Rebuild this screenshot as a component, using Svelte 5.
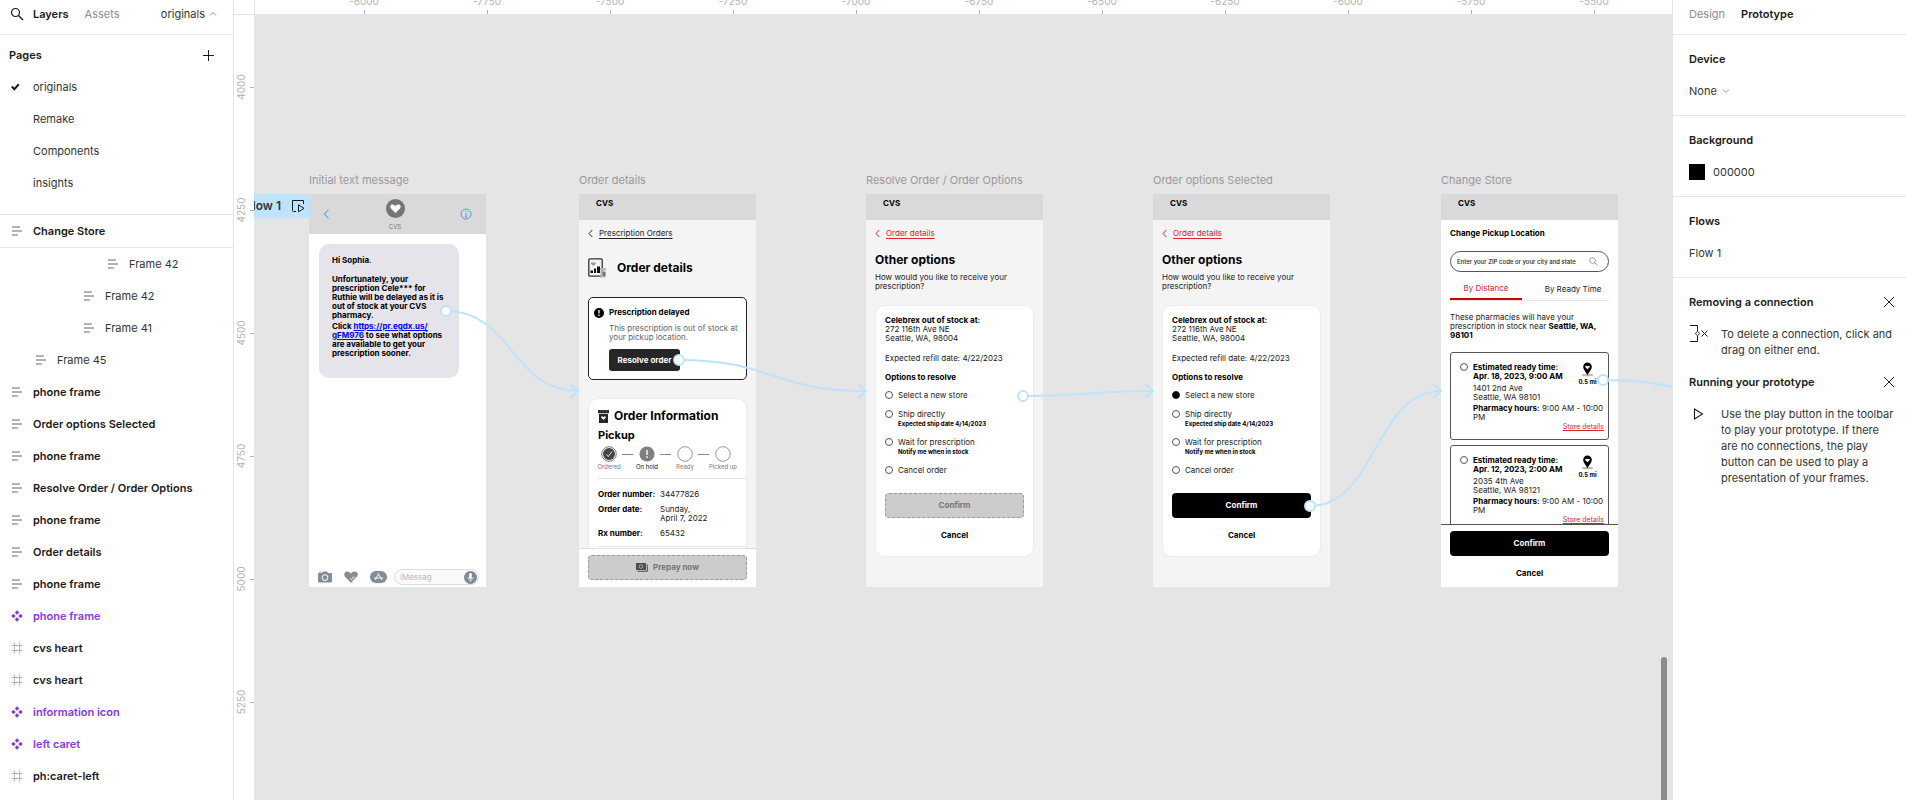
<script>
  const pages = ['originals', 'Remake', 'Components', 'insights'];
  const layers = [
    { name: 'Frame 42', icon: 'auto', depth: 4 },
    { name: 'Frame 42', icon: 'auto', depth: 3 },
    { name: 'Frame 41', icon: 'auto', depth: 3 },
    { name: 'Frame 45', icon: 'auto', depth: 1 },
    { name: 'phone frame', icon: 'auto', depth: 0 },
    { name: 'Order options Selected', icon: 'auto', depth: 0 },
    { name: 'phone frame', icon: 'auto', depth: 0 },
    { name: 'Resolve Order / Order Options', icon: 'auto', depth: 0 },
    { name: 'phone frame', icon: 'auto', depth: 0 },
    { name: 'Order details', icon: 'auto', depth: 0 },
    { name: 'phone frame', icon: 'auto', depth: 0 },
    { name: 'phone frame', icon: 'component', depth: 0 },
    { name: 'cvs heart', icon: 'frame', depth: 0 },
    { name: 'cvs heart', icon: 'frame', depth: 0 },
    { name: 'information icon', icon: 'component', depth: 0 },
    { name: 'left caret', icon: 'component', depth: 0 },
    { name: 'ph:caret-left', icon: 'frame', depth: 0 }
  ];

  const columns = Array.from({ length: 11 }, (_, i) => ({ label: -8000 + i * 250, at: 109 + i * 123 }));
  const lines = Array.from({ length: 6 }, (_, i) => ({ label: 4000 + i * 250, at: 72 + i * 123 }));

  const frames = [
    { id: 'message', title: 'Initial text message', x: 55 },
    { id: 'details', title: 'Order details', x: 325 },
    { id: 'options', title: 'Resolve Order / Order Options', x: 612 },
    { id: 'selected', title: 'Order options Selected', x: 899 },
    { id: 'store', title: 'Change Store', x: 1187 }
  ];

  const links = [
    { x1: 192, y1: 296, x2: 324, y2: 376 },
    { x1: 425, y1: 345, x2: 612, y2: 376 },
    { x1: 769, y1: 381, x2: 899, y2: 376 },
    { x1: 1056, y1: 491, x2: 1187, y2: 376 },
    { x1: 1349, y1: 365, x2: 1474, y2: 376 }
  ];
  const curve = (l) => {
    const m = (l.x1 + l.x2) / 2;
    return `M${l.x1} ${l.y1}C${m} ${l.y1} ${m} ${l.y2} ${l.x2} ${l.y2}`;
  };

  const choices = [
    { label: 'Select a new store' },
    { label: 'Ship directly', note: 'Expected ship date 4/14/2023' },
    { label: 'Wait for prescription', note: 'Notify me when in stock' },
    { label: 'Cancel order' }
  ];
  const stores = [
    { time: 'Apr. 18, 2023, 9:00 AM', street: '1401 2nd Ave', city: 'Seattle, WA 98101' },
    { time: 'Apr. 12, 2023, 2:00 AM', street: '2035 4th Ave', city: 'Seattle, WA 98121' }
  ];
</script>

{#snippet layerIcon(kind)}
  <svg class="licon" width="12" height="12" viewBox="0 0 12 12" aria-hidden="true">
    {#if kind === 'auto'}
      <path d="M1 1h8v2H1zM1 5h10v2H1zM1 9h6v2H1z" fill="#b3b3b3" />
    {:else if kind === 'component'}
      <path d="M6 .3 8.2 2.500 6 4.700 3.800 2.500zM6 7.300l2.200 2.200L6 11.700 3.800 9.500zM2.500 3.800 4.700 6 2.500 8.200.3 6zM9.500 3.800 11.700 6 9.500 8.200 7.300 6z" fill="#8638e5" />
    {:else}
      <path d="M3.500.5v11M8.500.5v11M.5 3.500h11M.5 8.500h11" stroke="#b3b3b3" fill="none" />
    {/if}
  </svg>
{/snippet}

{#snippet caret()}
  <svg width="5" height="9" viewBox="0 0 5 9" aria-hidden="true"><path d="M4.300 1 1 4.500 4.300 8" fill="none" stroke="currentColor" /></svg>
{/snippet}

{#snippet closeIcon()}
  <svg width="12" height="12" viewBox="0 0 12 12" aria-hidden="true"><path d="m1 1 10 10M11 1 1 11" stroke="#1a1a1a" fill="none" /></svg>
{/snippet}

{#snippet optionsScreen(id, picked)}
  <div class="brand">CVS</div>
  <div class="body">
    <a class="crumb red" href="#details">{@render caret()}<span>Order details</span></a>
    <h2 class="big top">Other options</h2>
    <p class="sub">How would you like to receive your<br />prescription?</p>
    <div class="card choice">
      <p><b>Celebrex out of stock at:</b><br />272 116th Ave NE<br />Seattle, WA, 98004</p>
      <p class="refill">Expected refill date: 4/22/2023</p>
      <h3>Options to resolve</h3>
      <div class="radios">
        {#each choices as c, i}
          <label class="radio">
            <input type="radio" name={id} checked={picked && i === 0} />
            <span>{c.label}{#if c.note}<small>{c.note}</small>{/if}</span>
          </label>
        {/each}
      </div>
      <button class={picked ? 'primary' : 'disabled'}>Confirm</button>
      <button class="plain">Cancel</button>
    </div>
  </div>
{/snippet}

<div class="app">
  <aside class="left">
    <header class="tabs">
      <svg class="search" width="14" height="14" viewBox="0 0 14 14" aria-hidden="true"><circle cx="5.500" cy="5.500" r="4" fill="none" stroke="#1a1a1a" stroke-width="1.200" /><path d="m8.500 8.500 4.500 4.500" stroke="#1a1a1a" stroke-width="1.400" /></svg>
      <button class="tab on">Layers</button>
      <button class="tab">Assets</button>
      <button class="pagesel">originals
        <svg width="8" height="6" viewBox="0 0 8 6" aria-hidden="true"><path d="M1 4.500 4 1.500l3 3" fill="none" stroke="#999" /></svg>
      </button>
    </header>
    <section class="pages">
      <div class="pagehead">
        <h2>Pages</h2>
        <button aria-label="Add page"><svg width="12" height="12" viewBox="0 0 12 12" aria-hidden="true"><path d="M6.500 1v11M1 6.500h11" stroke="#1a1a1a" /></svg></button>
      </div>
      {#each pages as p, i}
        <button class="row">
          <span class="mark">
            {#if i === 0}<svg width="10" height="8" viewBox="0 0 10 8" aria-hidden="true"><path d="m.8 3.500 2.500 2.700L7.800 1.300" fill="none" stroke="#1a1a1a" stroke-width="2" /></svg>{/if}
          </span>{p}
        </button>
      {/each}
    </section>
    <button class="row strong pinned"><span class="mark">{@render layerIcon('auto')}</span>Change Store</button>
    <nav class="layers">
      {#each layers as l}
        <button class="row depth{l.depth}" class:strong={l.depth === 0} class:purple={l.icon === 'component'}>
          <span class="mark">{@render layerIcon(l.icon)}</span>{l.name}
        </button>
      {/each}
    </nav>
  </aside>

  <main class="work">
    <div class="corner"></div>
    <svg class="ruler-x" aria-hidden="true">
      {#each columns as c}
        <text x={c.at} y="5" text-anchor="middle">{c.label}</text>
        <path d="M{c.at}.5 10v4" />
      {/each}
    </svg>
    <svg class="ruler-y" aria-hidden="true">
      {#each lines as l}
        <text text-anchor="middle" transform="translate(11 {l.at}) rotate(-90)">{l.label}</text>
        <path d="M16 {l.at}.5h4" />
      {/each}
    </svg>

    <div class="canvas">
      <div class="flowtag">
        <span>Flow 1</span>
        <svg width="14" height="14" viewBox="0 0 14 14" aria-hidden="true"><path d="M5 12.500H2.500a1 1 0 0 1-1-1v-10h11V5" fill="none" stroke="#1a1a1a" /><path d="M7.500 5.800v7l5.500-3.500z" fill="none" stroke="#1a1a1a" /></svg>
      </div>

      {#each frames as f}
        <article class="frame" style="left:{f.x}px">
          <h1>{f.title}</h1>
          <div class="phone" class:white={f.id === 'store' || f.id === 'message'}>
            {#if f.id === 'message'}
              <div class="contact">
                <button aria-label="Back"><svg width="7" height="10" viewBox="0 0 7 10" aria-hidden="true"><path d="M5.500.8 1.300 5l4.200 4.200" fill="none" stroke="#2f8af5" /></svg></button>
                <div class="who">
                  <svg width="19" height="19" viewBox="0 0 19 19" aria-hidden="true"><circle cx="9.500" cy="9.500" r="9.500" fill="#757575" /><path d="M9.500 14 5 9.500C3.500 7.700 4.600 5.500 6.600 5.500c1.300 0 2.300.8 2.900 1.800.6-1 1.600-1.800 2.900-1.800 2 0 3.100 2.200 1.600 4z" fill="#fff" /></svg>
                  <span>CVS</span>
                </div>
                <button aria-label="Info"><svg width="12" height="12" viewBox="0 0 12 12" aria-hidden="true"><circle cx="6" cy="6" r="5" fill="none" stroke="#2f8af5" stroke-width=".8" /><path d="M6 5v4M6 3v1M5 9h2" stroke="#2f8af5" stroke-width=".8" /></svg></button>
              </div>
              <div class="bubble">
                <p>Hi Sophia.</p>
                <p>Unfortunately, your<br />prescription Cele*** for<br />Ruthie will be delayed as it is<br />out of stock at your CVS<br />pharmacy.</p>
                <p>Click <a href="#pr">https://pr.egdx.us/<br />gFM976</a> to see what options<br />are available to get your<br />prescription sooner.</p>
              </div>
              <div class="compose">
                <svg width="14" height="12" viewBox="0 0 14 12" aria-hidden="true"><path d="M1 2h3l1-1.500h4L10 2h3q1 0 1 1v7.500q0 1-1 1H1q-1 0-1-1V3q0-1 1-1zM1 .8h2v.8H1z" fill="#848c99" /><circle cx="7" cy="6.600" r="2.900" fill="#848c99" stroke="#fff" /></svg>
                <svg width="14" height="12" viewBox="0 0 14 12" aria-hidden="true"><path d="M7 12 1.200 6C-1 3.300.8.500 3.500.500 5.200.5 6.400 1.500 7 2.700 7.600 1.500 8.800.5 10.500.5c2.700 0 4.500 2.800 2.300 5.500z" fill="#848c99" /><path d="M6 7 8.500 9.800M8 6l4 4.500M10 5.500l3.500 3.500" stroke="#fff" stroke-width=".9" /></svg>
                <svg width="17" height="12" viewBox="0 0 17 12" aria-hidden="true"><rect width="17" height="12" rx="6" fill="#848c99" /><path d="M5 9 9 2.500M8 2.500 12 9M4 7h6M11 7h2" stroke="#fff" stroke-width=".9" fill="none" /></svg>
                <label class="msg">
                  <input aria-label="Message" placeholder="iMessag" />
                  <svg width="13" height="13" viewBox="0 0 13 13" aria-hidden="true"><circle cx="6.500" cy="6.500" r="6.500" fill="#7d8796" /><rect x="5.200" y="2" width="2.600" height="6" rx="1.300" fill="#fff" /><path d="M3.800 6c0 4 5.400 4 5.400 0M6.500 9v2" stroke="#fff" stroke-width=".7" fill="none" /></svg>
                </label>
              </div>
            {:else if f.id === 'details'}
              <div class="brand">CVS</div>
              <div class="body">
                <a class="crumb" href="#orders">{@render caret()}<span>Prescription Orders</span></a>
                <div class="hero">
                  <svg width="19" height="20" viewBox="0 0 19 20" aria-hidden="true"><rect x=".8" y=".8" width="13.400" height="17.400" rx="1" fill="#f4f4f4" stroke="#333" stroke-width="1.300" /><path d="M2.500 12.500h2.500V15H2.500zM6 10.500h2V15H6zM9 8.500h3V15H9z" fill="#111" /><path d="m5.300 8-2.300-2.300c-.8-1.200.8-2.300 2.300-.9 1.500-1.400 3.100-.3 2.300.9z" fill="#999" /><path d="M12 10h6v2h-6zM12.500 12.500h5v7h-5z" fill="#b5b5b5" /><path d="M14.500 14h3v4h-3z" fill="#777" /></svg>
                  <h2 class="big">Order details</h2>
                </div>
                <div class="alert">
                  <svg width="10" height="10" viewBox="0 0 10 10" aria-hidden="true"><circle cx="5" cy="5" r="5" fill="#000" /><path d="M5 2v3.500M5 6.500V8" stroke="#fff" stroke-width="1.300" /></svg>
                  <div>
                    <h3>Prescription delayed</h3>
                    <p>This prescription is out of stock at<br />your pickup location.</p>
                    <button>Resolve order</button>
                  </div>
                </div>
                <div class="card info">
                  <div class="infohead">
                    <svg width="11" height="13" viewBox="0 0 11 13" aria-hidden="true"><path d="M0 0h11v3.200H0zM1 4h9v9H1z" fill="#262626" /><path d="M2.500 0v2M5.500 0v2M8.500 0v2" stroke="#777" stroke-width=".5" /><path d="M5.500 10 3.300 7.800c-.8-1.100.9-2.200 2.200-.8 1.300-1.400 3-.3 2.200.8z" fill="#fff" /></svg>
                    <h2 class="big">Order Information</h2>
                  </div>
                  <h3 class="mid">Pickup</h3>
                  <ol class="steps">
                    <li><svg width="16" height="16" viewBox="0 0 16 16" aria-hidden="true"><circle cx="8" cy="8" r="7.300" fill="#fff" stroke="#555" stroke-width=".8" /><circle cx="8" cy="8" r="6" fill="#444" /><path d="m5.500 8.500 1.800 2L11 5.500" fill="none" stroke="#fff" stroke-width=".8" /></svg>Ordered</li>
                    <li class="dark"><svg width="16" height="16" viewBox="0 0 16 16" aria-hidden="true"><circle cx="8" cy="8" r="7.600" fill="#808080" /><path d="M8 4v5M8 10.300V12" stroke="#fff" stroke-width="1.400" /></svg>On hold</li>
                    <li><svg width="16" height="16" viewBox="0 0 16 16" aria-hidden="true"><circle cx="8" cy="8" r="7.300" fill="#fff" stroke="#808080" stroke-width=".8" /></svg>Ready</li>
                    <li><svg width="16" height="16" viewBox="0 0 16 16" aria-hidden="true"><circle cx="8" cy="8" r="7.300" fill="#fff" stroke="#808080" stroke-width=".8" /></svg>Picked up</li>
                  </ol>
                  <dl>
                    <dt>Order number:</dt><dd>34477826</dd>
                    <dt>Order date:</dt><dd>Sunday,<br />April 7, 2022</dd>
                    <dt>Rx number:</dt><dd>65432</dd>
                  </dl>
                </div>
              </div>
              <div class="foot">
                <button class="disabled">
                  <svg width="12" height="9" viewBox="0 0 12 9" aria-hidden="true"><path d="M0 0h10v7H0z" fill="#4d4d4d" /><path d="M11.300 1.500v6.800H1.500" stroke="#4d4d4d" fill="none" /><circle cx="5" cy="3.500" r="1.800" fill="none" stroke="#ccc" stroke-width=".7" /></svg>
                  Prepay now
                </button>
              </div>
            {:else if f.id === 'store'}
              <div class="brand">CVS</div>
              <div class="body">
                <h3 class="pick">Change Pickup Location</h3>
                <label class="find">
                  <input aria-label="Location" placeholder="Enter your ZIP code or your city and state" />
                  <svg width="9" height="9" viewBox="0 0 9 9" aria-hidden="true"><circle cx="3.500" cy="3.500" r="2.900" fill="none" stroke="#777" stroke-width=".7" /><path d="M5.600 5.600 8.500 8.500" stroke="#777" stroke-width=".7" /></svg>
                </label>
                <div class="sort">
                  <button class="on">By Distance</button>
                  <button>By Ready Time</button>
                </div>
                <p class="near">These pharmacies will have your<br />prescription in stock near <b>Seattle, WA,<br />98101</b></p>
                {#each stores as s}
                  <div class="store">
                    <label class="radio">
                      <input type="radio" name="store" />
                      <b>Estimated ready time:<br />{s.time}</b>
                    </label>
                    <div class="dist">
                      <svg width="13" height="15" viewBox="0 0 13 15" aria-hidden="true"><ellipse cx="6.500" cy="13" rx="6" ry="1.300" fill="#bbb" /><path d="M6.500 13.500C5.500 10.500 2.200 8 2.200 4.800a4.300 4.300 0 0 1 8.600 0C10.800 8 7.500 10.500 6.500 13.500z" fill="#000" /><path d="M6.500 7.300 4.400 5.200c-.8-1.200.9-2.200 2.100-.9 1.200-1.300 2.900-.3 2.100.9z" fill="#fff" /></svg>
                      0.5 mi
                    </div>
                    <p class="addr">{s.street}<br />{s.city}</p>
                    <p class="hours"><b>Pharmacy hours:</b> 9:00 AM - 10:00<br />PM</p>
                    <a href="#store">Store details</a>
                  </div>
                {/each}
              </div>
              <div class="foot line">
                <button class="primary">Confirm</button>
                <button class="plain">Cancel</button>
              </div>
            {:else}
              {@render optionsScreen(f.id, f.id === 'selected')}
            {/if}
          </div>
        </article>
      {/each}

      <svg class="wires" aria-hidden="true">
        {#each links as l}
          <path d={curve(l)} />
          <path d="M{l.x2 - 8} {l.y2 - 7}l8 7-8 7" />
          <circle cx={l.x1} cy={l.y1} r="5" />
        {/each}
      </svg>
      <div class="scroll"></div>
    </div>
  </main>

  <aside class="right">
    <header class="tabs">
      <button class="tab">Design</button>
      <button class="tab on">Prototype</button>
    </header>
    <section>
      <h2>Device</h2>
      <label class="line32">
        <select aria-label="Device"><option>None</option></select>
        <svg width="8" height="6" viewBox="0 0 8 6" aria-hidden="true"><path d="M1 1.500l3 3 3-3" fill="none" stroke="#999" /></svg>
      </label>
    </section>
    <section>
      <h2>Background</h2>
      <label class="line32 color"><span class="swatch"></span><input aria-label="Background color" value="000000" /></label>
    </section>
    <section>
      <h2>Flows</h2>
      <button class="line32">Flow 1</button>
    </section>
    <section class="tips">
      <div class="tiphead"><h2>Removing a connection</h2><button aria-label="Close">{@render closeIcon()}</button></div>
      <div class="tip">
        <svg width="20" height="18" viewBox="0 0 20 18" aria-hidden="true"><path d="M1 .5h7.500V6M8.500 11v5.500H1" fill="none" stroke="#1a1a1a" /><path d="M8.500 6.300 10.700 8.500 8.500 10.700 6.300 8.500z" fill="none" stroke="#1a1a1a" /><path d="m12.500 5.500 6 6M18.500 5.500l-6 6" stroke="#1a1a1a" /></svg>
        <p>To delete a connection, click and drag on either end.</p>
      </div>
      <div class="tiphead"><h2>Running your prototype</h2><button aria-label="Close">{@render closeIcon()}</button></div>
      <div class="tip">
        <svg width="20" height="18" viewBox="0 0 20 18" aria-hidden="true"><path d="M5.500 4v10l8-5z" fill="none" stroke="#1a1a1a" stroke-width="1.100" /></svg>
        <p>Use the play button in the toolbar to play your prototype. If there are no connections, the play button can be used to play a presentation of your frames.</p>
      </div>
    </section>
  </aside>
</div>

<style>
  :global(body) { margin: 0; overflow: hidden; }
  .app { display: grid; grid-template-columns: 234px 1fr 234px; height: 100vh; font: 11px/16px Inter, sans-serif; color: #333; background: #fff; }
  h1, h2, h3, p, ol, dl, dd { margin: 0; padding: 0; }
  button, input, select { font: inherit; color: inherit; background: none; border: 0; padding: 0; margin: 0; text-align: left; }
  svg { display: block; flex: none; }

  /* side panels */
  .left, .right { box-sizing: border-box; min-width: 0; overflow: hidden; background: #fff; }
  .left { border-right: 1px solid #e5e5e5; }
  .right { border-left: 1px solid #e5e5e5; }
  .tabs { display: flex; align-items: center; height: 28px; padding-bottom: 6px; border-bottom: 1px solid #e5e5e5; }
  .left .tabs, .right .tabs { height: 22px; padding-top: 6px; }
  .tab { color: #8c8c8c; }
  .tab.on { color: #1a1a1a; font-weight: 600; }
  .left .tabs { padding-left: 10px; }
  .left .tab { margin-left: 9px; margin-right: 7px; }
  .pagesel { display: flex; align-items: center; gap: 4px; margin-left: auto; margin-right: 16px; }
  .right .tabs { gap: 16px; padding-left: 16px; }
  .left .tabs, .right .tabs { height: 28px; padding-top: 0; }
  .left h2, .right h2 { font-size: 11px; line-height: 32px; font-weight: 600; color: #1a1a1a; }
  .pages { padding: 4px 0 15px; border-bottom: 1px solid #e5e5e5; }
  .pagehead { display: flex; align-items: center; justify-content: space-between; padding: 0 19px 0 9px; }
  .row { display: flex; align-items: center; width: 100%; height: 32px; padding-left: 11px; white-space: nowrap; }
  .mark { width: 22px; flex: none; }
  .strong { font-weight: 600; color: #1a1a1a; }
  .purple { color: #8638e5; }
  .pinned { box-sizing: border-box; height: 33px; border-bottom: 1px solid #e5e5e5; }
  .depth1 { padding-left: 35px; }
  .depth3 { padding-left: 83px; }
  .depth4 { padding-left: 107px; }
  .right section { padding: 8px 11px 8px 16px; border-bottom: 1px solid #e5e5e5; }
  .right section:last-child { border: 0; }
  .line32 { display: flex; align-items: center; gap: 5px; height: 32px; }
  .line32 select { appearance: none; }
  .color { gap: 8px; }
  .color input { width: 80px; }
  .swatch { width: 16px; height: 16px; background: #000; }
  .tiphead { display: flex; align-items: center; justify-content: space-between; }
  .tip { display: flex; gap: 12px; padding: 8px 0; }
  .tip svg { margin-top: -1px; }

  /* rulers */
  .work { display: grid; grid-template: 15px 1fr / 20px 1fr; min-width: 0; min-height: 0; }
  .corner { border-bottom: 1px solid #e5e5e5; }
  .ruler-x { width: 100%; height: 15px; box-sizing: border-box; border-left: 1px solid #e5e5e5; border-bottom: 1px solid #e5e5e5; }
  .ruler-y { width: 20px; height: 100%; }
  .work > svg text { font-size: 10px; fill: #b3b3b3; }
  .work > svg path { stroke: #b3b3b3; }

  /* canvas */
  .canvas { position: relative; overflow: hidden; background: #e5e5e5; }
  .wires { position: absolute; inset: 0; width: 100%; height: 100%; pointer-events: none; }
  .wires path { fill: none; stroke: #bde3ff; stroke-width: 2; }
  .wires circle { fill: #fff; stroke: #bde3ff; stroke-width: 2; }
  .scroll { position: absolute; right: 5px; top: 642px; bottom: -8px; width: 6px; border-radius: 3px; background: #8c8c8c; }
  .flowtag { position: absolute; left: -20px; top: 179px; display: flex; align-items: center; justify-content: flex-end; gap: 10px; width: 75px; height: 24px; box-sizing: border-box; padding-right: 4px; background: #bde3ff; color: #333; font-size: 12px; font-weight: 600; white-space: nowrap; }
  .frame { position: absolute; top: 157px; width: 177px; }
  .frame h1 { height: 22px; font-size: 11px; line-height: 16px; font-weight: 400; color: #999; white-space: nowrap; }
  .phone { display: flex; flex-direction: column; height: 393px; overflow: hidden; background: #f4f4f4; color: #222; font-size: 8px; line-height: 9px; white-space: nowrap; }
  .phone.white { background: #fff; }
  .phone b, .phone h3, .phone dt { font-weight: 700; color: #000; }
  .phone h3 { font-size: 8px; line-height: 9px; }
  .phone .big { font-size: 12px; line-height: 14px; font-weight: 700; color: #000; }
  .brand { flex: none; height: 21px; padding: 5px 17px 0; background: #d9d9d9; font-weight: 700; color: #000; }
  .body { flex: 1; min-height: 0; overflow: hidden; padding: 9px 9px 0; }
  .crumb { display: flex; align-items: center; gap: 6px; color: #222; text-decoration: none; }
  .crumb span { text-decoration: underline; text-underline-offset: 2px; }
  .crumb.red { color: #d9252a; }
  .top { margin-top: 15px; }
  .sub { margin-top: 6px; }
  .card { box-sizing: border-box; border: 1px solid #ececec; border-radius: 10px; background: #fff; }
  .choice { margin-top: 14px; padding: 10px 9px 16px; }
  .refill { margin-top: 11px; }
  .choice h3 { margin-top: 10px; }
  .radios { display: grid; gap: 10px; margin-top: 9px; }
  .radio { display: flex; gap: 5px; }
  .radio input { appearance: none; box-sizing: border-box; width: 8px; height: 8px; flex: none; border: 1px solid #555; border-radius: 4px; }
  .radio input:checked { background: #000; border-color: #222; }
  .radio small { display: block; font-size: 6px; font-weight: 700; color: #000; }
  .primary, .disabled, .plain { display: flex; align-items: center; justify-content: center; width: 100%; font-weight: 700; box-sizing: border-box; }
  .primary, .disabled { height: 25px; border-radius: 4px; }
  .primary { background: #000; color: #fff; }
  .disabled { gap: 5px; background: #ccc; color: #757575; border: 1px dashed #999; }
  .plain { color: #000; margin-top: 13px; }
  .choice .primary, .choice .disabled { margin-top: 18px; }
  .foot { flex: none; padding: 6px 9px 7px; border-top: 1px solid #ddd; background: #fff; }
  .foot.line { border-color: #555; padding-bottom: 9px; }

  /* text message */
  .contact { display: flex; justify-content: space-between; flex: none; height: 35px; padding: 5px 14px 0; background: #d9d9d9; }
  .contact > button { height: 30px; }
  .contact button svg { margin: auto; }
  .who { display: grid; justify-items: center; align-content: start; gap: 4px; height: 32px; font-size: 6px; color: #777; }
  .bubble { display: grid; gap: 2px; width: 113px; height: 114px; margin: 10px 0 0 10px; padding: 12px 14px 8px 13px; border-radius: 10px; background: #e4e4ea; font-weight: 700; color: #000; align-content: start; }
  .bubble p:first-child { margin-bottom: 8px; }
  .bubble a { color: #00f; }
  .compose { display: flex; align-items: center; gap: 12px; margin-top: auto; padding: 0 7px 2px 9px; }
  .msg { display: flex; align-items: center; flex: 1; min-width: 0; height: 14px; margin-left: -5px; padding: 0 1px 0 5px; border: 1px solid #ddd; border-radius: 8px; background: #fafafa; }
  .msg input { flex: 1; min-width: 0; height: 9px; }
  .msg input::placeholder { color: #b8b8b8; }

  /* order details */
  .hero { display: flex; align-items: center; gap: 10px; margin-top: 20px; }
  .alert { display: flex; gap: 5px; margin-top: 19px; padding: 10px 5px 8px; border: 1px solid #222; border-radius: 5px; background: #fff; }
  .alert p { margin-top: 7px; color: #666; }
  .alert button { width: 71px; height: 22px; margin-top: 7px; border-radius: 3px; background: #262626; color: #fff; font-weight: 700; text-align: center; }
  .info { height: 180px; margin-top: 18px; padding: 10px 0 0 9px; }
  .infohead { display: flex; align-items: center; gap: 5px; }
  .phone .mid { margin-top: 4px; font-size: 11px; line-height: 16px; }
  .steps { display: grid; grid-template-columns: repeat(4, 38px); margin: 3px 0 0 -8px; list-style: none; font-size: 6px; color: #777; }
  .steps li { position: relative; display: grid; justify-items: center; }
  .steps li + li::before { content: ''; position: absolute; left: -6px; top: 8px; width: 11px; height: 1px; background: #888; }
  .steps .dark { color: #111; }
  .info dl { display: grid; grid-template-columns: 62px 1fr; row-gap: 6px; margin-top: 7px; padding: 11px 0 8px; border: 1px solid #e5e5e5; border-width: 1px 0; }

  /* change store */
  .find { display: flex; align-items: center; height: 19px; margin-top: 13px; padding: 0 10px 0 6px; border: 1px solid #555; border-radius: 11px; }
  .find input { flex: 1; min-width: 0; font-size: 6px; font-weight: 500; }
  .find input::placeholder { color: #222; }
  .sort { display: grid; grid-template-columns: 72px 1fr; margin-top: 8px; border-bottom: 1px solid #e5e5e5; }
  .sort button { height: 20px; padding-bottom: 2px; text-align: center; }
  .sort button:last-child { padding-left: 15px; }
  .sort .on { color: #d9252a; border-bottom: 2px solid #c00; margin-bottom: -1px; }
  .near { margin: 12px 0; }
  .store { display: grid; grid-template-columns: 1fr 28px; margin-bottom: 5px; padding: 10px 4px 8px 9px; border: 1px solid #555; border-radius: 3px; }
  .dist { display: grid; justify-items: center; font-size: 6px; font-weight: 700; color: #000; margin: -1px 0 -4px -5px; }
  .addr, .hours { grid-column: 1 / -1; padding-left: 13px; }
  .addr { margin-top: 2px; }
  .hours { margin-top: 2px; }
  .store a { grid-column: 1 / -1; justify-self: end; font-size: 7px; color: #d9252a; text-underline-offset: 1px; }
</style>
